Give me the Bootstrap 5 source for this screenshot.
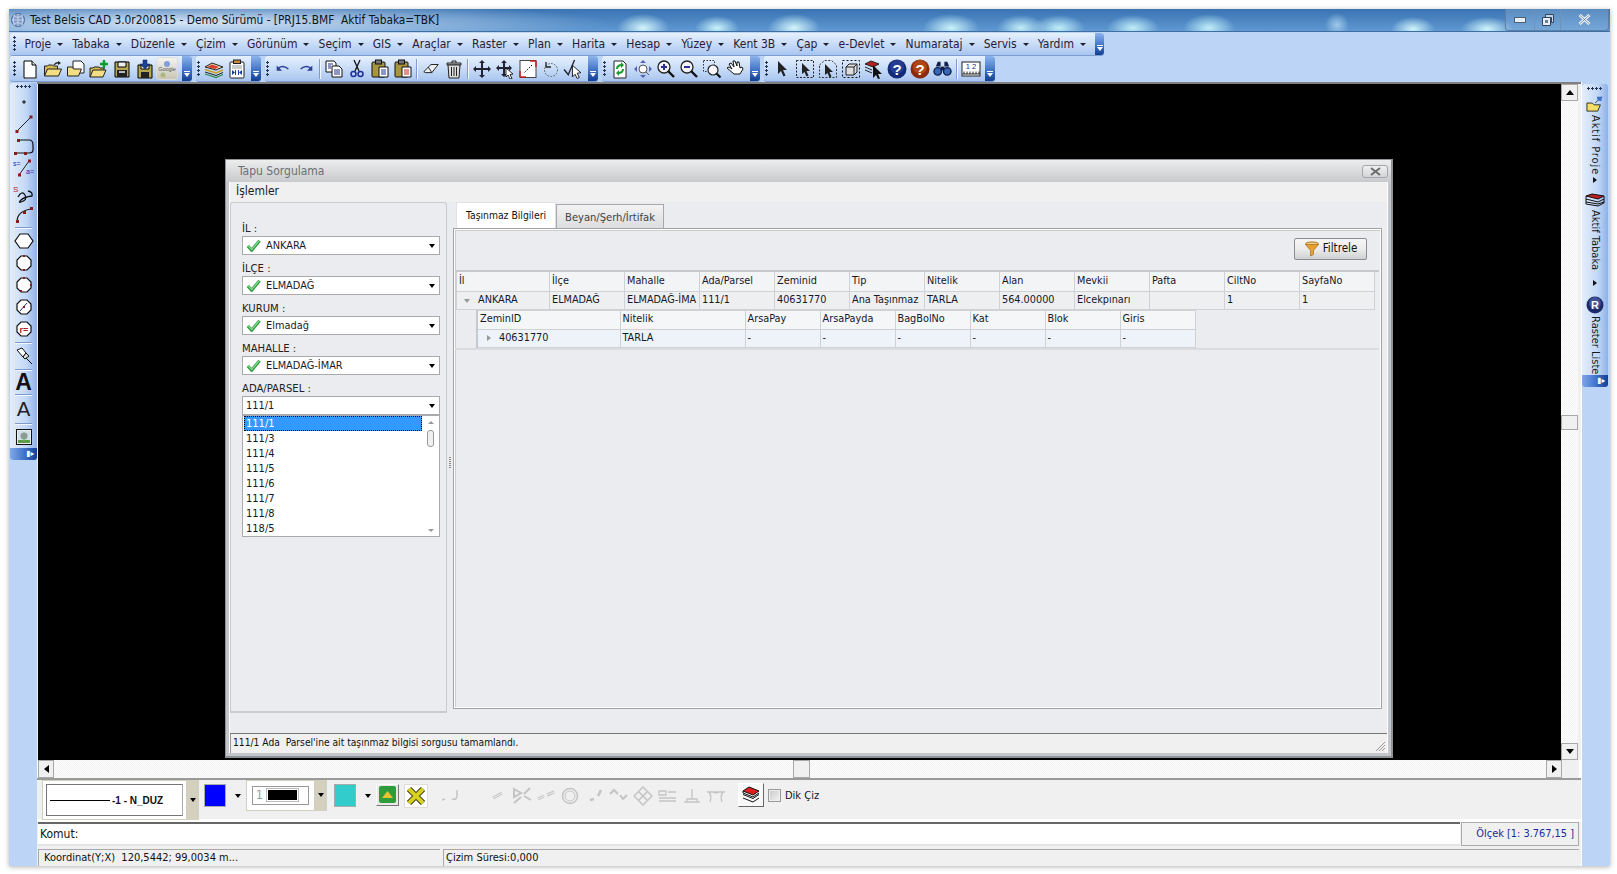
<!DOCTYPE html>
<html lang="tr">
<head>
<meta charset="UTF-8">
<title>Test Belsis CAD</title>
<link href="https://cdn.jsdelivr.net/npm/bootstrap@5.3.3/dist/css/bootstrap.min.css" rel="stylesheet">
<style>
html,body{height:100%;overflow:hidden}
body{background:#fff;font-family:"DejaVu Sans Condensed","DejaVu Sans",sans-serif;font-size:11.5px;color:#10152a;line-height:1.2}
svg{display:block;flex:none}
.appwin{position:absolute;left:9px;top:9px;width:1601px;height:857px;background:#bcd4f6;box-shadow:0 1px 5px rgba(0,0,0,.3)}
.titlebar{height:23px;border-bottom:1px solid #3f6ea0;padding-left:1px;font-size:11.8px;color:#0c1420;
 background:
 radial-gradient(ellipse 26px 14px at 634px 19px,#d4f6fb,transparent),
 radial-gradient(ellipse 22px 12px at 708px 19px,#c9f2fa,transparent),
 radial-gradient(ellipse 26px 14px at 785px 19px,#d4f6fb,transparent),
 radial-gradient(ellipse 28px 14px at 942px 19px,#c9f2fa,transparent),
 radial-gradient(ellipse 24px 13px at 1012px 19px,#c0ecf7,transparent),
 radial-gradient(ellipse 26px 13px at 1050px 19px,#bfeef8,transparent),
 radial-gradient(ellipse 26px 13px at 1124px 19px,#bfeef8,transparent),
 radial-gradient(ellipse 26px 14px at 1200px 19px,#bfeef8,transparent),
 radial-gradient(ellipse 12px 12px at 1328px 16px,#9fc8ea,transparent),
 radial-gradient(ellipse 22px 12px at 1404px 20px,#cff5fb,transparent),
 radial-gradient(ellipse 26px 12px at 1478px 20px,#cff5fb,transparent),
 radial-gradient(ellipse 420px 22px at 180px 14px,#d6e4f6,transparent),
 linear-gradient(#3a74b2,#5f98d2)}
.wbtns{height:22px;margin-right:1px;border:1px solid #5d7fa6;border-top:0;border-radius:0 0 4px 4px;background:rgba(190,215,240,.25)}
.wb{height:21px;border-right:1px solid #6e93bb}
.wb:last-child{border-right:0}
.wb1{width:29px}.wb2{width:26px}.wb3{width:47px}
.menurow{height:24px;padding:1px 0 0 1px}
.tgrp,.menustrip{border-radius:3px;height:23px;background:linear-gradient(#e6f0fd,#c5daf7 55%,#a9c5ef);border-bottom:1px solid #7d9dd0}
.menustrip{width:1094px;padding-left:3px}
.toolrow{height:26px;padding:0 0 0 1px;gap:4px}
.tgrp{height:26px;padding-left:1px}
.tg1{width:182px;padding-left:3px}.tg2{width:65px}.tg3{width:333px}.tg4{width:158px}.tg5{width:231px}
.tgrip{width:5px;height:16px;background:radial-gradient(circle at 1.5px 1.5px,#22344f 1.2px,transparent 1.4px) 0 0/5px 4px repeat-y}
.mgrip{margin-right:7px}
.ovf{width:10px;align-self:stretch;margin-left:auto;border-radius:0 3px 3px 0;background:linear-gradient(#8cb4ec,#3c6fc4 60%,#123f92);position:relative}
.ovf::after{content:"";position:absolute;left:2px;bottom:4px;border:3px solid transparent;border-top:4px solid #fff;border-bottom:0}
.ovf::before{content:"";position:absolute;left:2px;bottom:9px;width:6px;height:1px;background:#fff}
.tb{width:23px;height:23px;display:flex;align-items:center;justify-content:center}
.tsep{width:5px;height:20px;display:flex;justify-content:center}
.tsep::after{content:"";width:1px;background:#7d9bcb;box-shadow:1px 0 #f2f7ff}
.mi{color:#2b1a35;text-decoration:none;font-size:12px;white-space:nowrap;padding-right:9.2px}
.mi.dropdown-toggle::after{margin-left:6px;border-top:3.5px solid #1c1c2c;border-right:3px solid transparent;border-left:3px solid transparent;border-bottom:0;vertical-align:2px}
.leftdock{width:28px;padding-left:1px;padding-top:1px}
.vtool{border-radius:3px;background:linear-gradient(90deg,#e4eefc,#c2d8f6 60%,#8fb0e6);width:27px}
.ltool{height:377px;padding-top:1px}
.lt{height:22px;flex:none;display:flex;justify-content:center;align-items:center}
.lt-arc{margin-top:-2px}
.lt-a{height:20px;line-height:20px;font:700 23px/20px "Liberation Sans",sans-serif;color:#111}
.lt-b{height:24px;font:400 20px/24px "DejaVu Sans",sans-serif;color:#222}
.vgrip{height:5px;width:16px;margin:1px 0 1px;flex:none;background:radial-gradient(circle at 1.5px 1.5px,#22344f 1.2px,transparent 1.4px) 0 0/4px 5px repeat-x}
.vsep{width:17px;height:1px;flex:none;background:#7d9bcb;box-shadow:0 1px #f2f7ff;margin:2px 0}
.imgic{margin-top:3px}
.vovf{height:12px;margin-top:auto;flex:none;border-radius:0 0 3px 3px;background:linear-gradient(90deg,#7fa8e8,#3f72c8 55%,#123f92);font-size:8px;line-height:12px;color:#fff;text-align:right;padding-right:3px}
.centercol{width:1544px;background:#fff}
.topedge{height:2px;background:#7f7f7f;flex:none}
.canvasrow{height:676px;padding-left:1px;background:#f0f0f0;flex:none;padding-right:2px}
.blackarea{width:1523px;background:#000;position:relative}
.dither{background:repeating-conic-gradient(#fff 0 25%,#f1f1f1 0 50%) 0 0/2px 2px}
.vscroll{width:17px}
.sbtn{width:17px;height:17px;background:#f0f0f0;border:1px solid #a8a8a8;display:flex;align-items:center;justify-content:center;flex:none}
.hbtn{width:16px;height:18px}
.vthumb{width:17px;height:15px;margin-top:314px;background:#f0f0f0;border:1px solid #a8a8a8}
.hscroll{height:18px;padding-left:1px;flex:none;padding-right:2px}
.hthumb{width:17px;height:18px;margin-left:739px;background:#f0f0f0;border:1px solid #a8a8a8}
.corner{width:17px;background:#f0f0f0}
.arr-u{border:4px solid transparent;border-bottom:5px solid #000;border-top:0}
.arr-d{border:4px solid transparent;border-top:5px solid #000;border-bottom:0}
.arr-l{border:4px solid transparent;border-right:5px solid #000;border-left:0}
.arr-r{border:4px solid transparent;border-left:5px solid #000;border-right:0}
.btoolwrap{height:44px;flex:none;background:#f0f0f0;border-top:2px solid #9a9a9a;padding-left:1px;border-bottom:3px solid #fff}
.lsbox{width:145px;height:40px;margin:1px 0 0 4px;background:#fff;border:1px solid #d2cfbd;padding:3px}
.lsinner{height:32px;border:1px solid #777;border-color:#777 #aaa #777 #777;padding-left:3px;font:bold 10px "Liberation Sans",sans-serif;color:#111}
.lsline{width:60px;height:1px;border-top:1.5px solid #000;margin-right:2px}
.dd{width:12px;height:40px;margin-top:1px;background:#d4d0c0;display:flex;align-items:center;justify-content:center}
.dd i,.smallarr{display:block;border:3.5px solid transparent;border-top:4.5px solid #000;border-bottom:0}
.colorsw{width:22px;height:23px;border:1px solid #aaa;margin-left:5px;margin-top:-9px}
.c-blue{background:#0000ff}.c-teal{background:#33cccc;margin-left:7px}
.smallarr{margin:0 5px 0 9px}
.wbox{width:69px;height:31px;margin:0 0 9px 0;background:#fff;border:1px solid #d2cfbd;padding:5px 5px}
.winner{height:100%;border:1px solid #999;color:#999;font-size:12px;padding-left:3px;gap:5px}
.wbar{width:29px;height:10px;background:#000;outline:1px solid #bbb;outline-offset:1px}
.ddw{width:12px;height:31px;margin-bottom:9px;background:#d4d0c0;display:flex;align-items:center;justify-content:center}
.gbtn{width:23px;height:22px;margin:0 5px 10px 0;border:1px solid;border-color:#fff #777 #777 #fff;background:#e8e8e8;display:flex;align-items:center;justify-content:center}
.ybtn{width:24px;height:24px;margin-bottom:8px;background:#fff;border:1px solid #ddd;display:flex;align-items:center;justify-content:center}
.bookbtn{width:26px;height:24px;margin-bottom:9px;background:#f8f8f8;border:1px solid;border-color:#fff #666 #666 #fff;display:flex;align-items:center;justify-content:center}
.dikchk{width:13px;height:13px;border:1px solid #999;background:linear-gradient(135deg,#c8c8c8,#f4f4f4);margin:0 4px;box-shadow:inset 0 0 0 1px #eee}
.dikwrap{margin-bottom:8px;font-size:11px}
.cmdrow{height:24px;flex:none;background:#f0f0f0;padding-left:1px;padding-right:2px}
.cmdin{flex:1;background:#fff;border-top:2px solid #666;border-bottom:2px solid #e4e4e4;margin-right:1px;font-size:12px;padding:3px 0 0 2px;color:#111}
.scalebox{width:118px;border:1px solid #aaa;background:#f0f0f0;color:#1c2a9c;text-align:right;padding:4px 4px 0 0;font-size:10.9px}
.statusrow{flex:1;background:#f0f0f0;padding-top:3px;padding-left:1px;font-size:11px;color:#111}
.stp{border:1px solid #a8a8a8;border-width:1px 0 0 1px;padding:1px 0 0 5px;height:100%}
.stp1{width:402px}.stp2{flex:1;margin:0 2px 0 3px;padding-left:2px}
.rightdock{width:29px;border-left:1px solid #fff;padding-top:2px}
.rtool{height:302px;width:26px;padding-top:2px}
.rtool .vgrip{margin:1px 0 3px}
.rtxt{writing-mode:vertical-rl;font-size:11px;color:#1a1a1a;line-height:16px;white-space:nowrap;flex:none}
.rtxt-a{letter-spacing:.9px}
.rarr{display:block;flex:none;border-style:solid;border-width:3px 0 3px 4px;border-color:transparent transparent transparent #111}
.rm3{margin-top:3px}.rm2{margin-top:2px}.rm10{margin-top:10px}
.tdlg{position:absolute;left:187px;top:75px;width:1168px;height:599px;background:#c3c6cb;border:1px solid #8f9297;border-width:1px 2px 2px 1px}
.dhead{height:22px;background:linear-gradient(#eceded,#c8cacd);color:#6b6f76;padding-left:12px;font-size:12px;flex:none}
.dclose{width:26px;height:13px;margin-right:3px;border:1px solid #a3a5a9;border-radius:3px;background:linear-gradient(#f0f0f0,#d4d5d8);display:flex;align-items:center;justify-content:center}
.dinner{flex:1;min-height:0;margin:0 3px 3px 3px;background:#ebecef;border-left:1px solid #fff;border-right:1px solid #fff}
.dmenu{height:20px;background:#f0f0f0;padding:2px 0 0 6px;font-size:12px;color:#222;flex:none}
.dbody{flex:1;min-height:0}
.lpanel{width:217px;border:1px solid #c8cace;border-width:1px 1px 2px 1px;border-radius:3px 3px 0 0;padding:12px 6px 0 11px;font-size:11.2px}
.flbl{height:21px;padding-top:7px;color:#222}
.cmb{height:19px;border:1px solid #a8aaae;background:#fff;padding-left:3px;gap:5px;color:#1a1a2a;font-size:10.9px}
.cmb .smallarr{margin:0 4px 0 auto}
.dlist{position:absolute;top:100%;left:0;right:0;height:122px;background:#fff;border:1px solid #a8aaae;z-index:2;color:#14182a;font-size:11px}
.ditem{height:15px;line-height:15px;padding-left:2px;margin-left:1px}
.dsel{background:#3399ff;color:#fff;outline:1px dotted #000;outline-offset:-1px}
.lscroll{width:17px;padding-top:5px}
.lthumb{width:7px;height:17px;border:1px solid #9a9a9a;border-radius:3px;background:#f0f0f0;margin-top:6px}
.ua{border:3px solid transparent;border-bottom:3px solid #999;border-top:0}
.da{border:3px solid transparent;border-top:3px solid #999;border-bottom:0;margin-top:auto;margin-bottom:4px}
.splitter{width:6px}
.splitgrip{width:2px;height:11px;background:repeating-linear-gradient(#888 0 1px,#eee 1px 2px);margin-top:9px}
.rpanel{flex:1;min-width:0;padding:0 5px 0 0;position:relative}
.ttabs{border:0;padding-left:3px;height:26px;flex:none;flex-wrap:nowrap}
.ttabs .nav-link{border:1px solid #a8a8a8;border-bottom:0;border-radius:0;padding:6px 8px 0 8px;font-size:11.1px;color:#444;background:linear-gradient(#f3f3f3,#dcdde0);margin:2px 0 0 0;height:24px}
.ttabs .nav-link.active{background:#fff;color:#111;height:26px;margin-top:0;padding:6px 9px 0 9px;font-size:10.3px}
.tpane{flex:1;border:1px solid #a2a2a2;padding:1px;margin-bottom:4px;background:#fff;min-height:0}
.tpane-in{height:100%;background:#ebecef;padding:0 1px 0 0;box-shadow:inset 1px 1px #ccc}
.ftrow{height:42px;padding-right:12px;border-bottom:2px solid #c6c8cc;flex:none;padding-top:8px}
.fbtn{width:73px;height:22px;padding:0;font-size:11.5px;border:1px solid #8b8d90;border-radius:2px;background:linear-gradient(#f6f6f6,#ececec 50%,#cfd0d2);color:#111;display:flex;align-items:center;justify-content:center;gap:3px}
.gtbl{border-collapse:collapse;table-layout:fixed;color:#14182a;font-size:10.8px}
.gtbl td,.gtbl th{font-weight:400;border:1px solid #cfd1d5;padding:0 0 0 2px;white-space:nowrap;overflow:hidden;height:18px}
.gmain th{background:#f3f4f6;height:19px;border-top:0}
.gmain td{background:#eeeff1}
.gsub th{background:#f5f6f8;height:19px}
.gsub td{background:#edf3f8}
.gmain{width:918px;margin-left:1px}
.gsubwrap{padding-left:21px;border-bottom:2px solid #dadce0;flex:none}
.gsub{width:718px;border-left:2px solid #c6c8cc}
.pad-exp{padding-left:21px !important;position:relative}
.tree-d{position:absolute;left:7px;top:7px;border:3.5px solid transparent;border-top:4px solid #999;border-bottom:0}
.tree-r{position:absolute;left:9px;top:5px;border:3.5px solid transparent;border-left:4px solid #999;border-right:0}
.dpadbar{height:20px;flex:none}
.dstatus{height:20px;flex:none;background:#f0f0f0;border-top:1px solid #777;padding:3px 0 0 3px;font-size:10.2px;box-shadow:inset 1px 0 #999;position:relative;color:#111}
.grip{position:absolute;right:1px;bottom:1px}
</style>
</head>
<body>
<svg width="0" height="0" class="position-absolute">
<defs>
<symbol id="s-new" viewBox="0 0 20 20"><path d="M4 2h8l4 4v13H4z" fill="#fff" stroke="#000"/><path d="M12 2v4h4" fill="#ddd" stroke="#000"/><path d="M5 20h12" stroke="#888"/></symbol>
<symbol id="s-open" viewBox="0 0 20 20"><path d="M1.5 17V7h3l1-1h4l1 1h4v3" fill="#d6bb55" stroke="#222"/><path d="M1.5 17l3-7h14l-3 7z" fill="#f4de84" stroke="#222"/><path d="M11 6q2-3 5-2" fill="none" stroke="#222" stroke-width="1.3"/><path d="M15 2l3 2-3 2z" fill="#222"/></symbol>
<symbol id="s-open2" viewBox="0 0 20 20"><path d="M7 2h8l3 3v9H7z" fill="#fff" stroke="#222"/><path d="M1.5 17V8h5l1 2h8l-3 7z" fill="#f4de84" stroke="#222"/></symbol>
<symbol id="s-folderp" viewBox="0 0 20 20"><path d="M1 18V9h3l1-1h5l1 1h4v2" fill="#d6bb55" stroke="#222"/><path d="M1 18l3-7h13l-3 7z" fill="#f4de84" stroke="#222"/><path d="M15 1v8M11 5h8" stroke="#0c9c2c" stroke-width="2.4"/></symbol>
<symbol id="s-save" viewBox="0 0 20 20"><path d="M3 3h14v15H3z" fill="#b7a650" stroke="#000"/><path d="M6 3h8v5H6z" fill="#eee" stroke="#000"/><path d="M5 11h10v7H5z" fill="#222"/><path d="M7 12h6v2H7z" fill="#bbb"/></symbol>
<symbol id="s-saveas" viewBox="0 0 20 20"><path d="M3 6h14v13H3z" fill="#b7a650" stroke="#000"/><path d="M6 13h8v6H6z" fill="#222"/><path d="M6 6h8v4H6z" fill="#eee" stroke="#000"/><path d="M8 1h4v4h3l-5 5-5-5h3z" fill="#1c3f96" stroke="#0a1f50" stroke-width=".5"/></symbol>
<symbol id="s-layers" viewBox="0 0 20 20"><path d="M1 8l7-4 11 4-7 3z" fill="#e8dcc0" stroke="#222"/><path d="M3 8l5-2.500 7 2.500-4 2z" fill="#d8402c"/><path d="M1 10.500l11 3.500 7-3" fill="none" stroke="#c8a020" stroke-width="1.500"/><path d="M1 13l11 3.500 7-3" fill="none" stroke="#222"/><path d="M1 15l11 3.500 7-3" fill="none" stroke="#2c8c48" stroke-width="1.300"/></symbol>
<symbol id="s-clip" viewBox="0 0 20 20"><rect x="3" y="3" width="14" height="16" rx="1" fill="#fff" stroke="#222"/><rect x="6.500" y="1" width="7" height="3.500" fill="#c83" stroke="#222"/><path d="M5 7h10M5 9h10" stroke="#999"/><path d="M5 11v5l3-2.500zM15 11v5l-3-2.500z" fill="#1c3f96"/><path d="M8.500 11v5M11.500 11v5" stroke="#1c3f96"/></symbol>
<symbol id="s-undo" viewBox="0 0 20 20"><path d="M5 9q5-4 11 1" fill="none" stroke="#2c3f96" stroke-width="1.800"/><path d="M3 6v6h6z" fill="#2c3f96"/></symbol>
<symbol id="s-redo" viewBox="0 0 20 20"><path d="M15 9q-5-4-11 1" fill="none" stroke="#2c3f96" stroke-width="1.800"/><path d="M17 6v6h-6z" fill="#2c3f96"/></symbol>
<symbol id="s-copy" viewBox="0 0 20 20"><path d="M2 2h8l2 2v9H2z" fill="#fff" stroke="#111"/><path d="M8 7h7l3 3v8H8z" fill="#fff" stroke="#111"/><path d="M4 5h5M4 7h3M4 9h3M10 11h6M10 13h6M10 15h6" stroke="#1c2f86"/></symbol>
<symbol id="s-cut" viewBox="0 0 20 20"><path d="M7 1l5 11M13 1l-5 11" stroke="#111" stroke-width="1.300"/><circle cx="6.500" cy="15" r="2.500" fill="none" stroke="#1c2f96" stroke-width="1.500"/><circle cx="13.500" cy="15" r="2.500" fill="none" stroke="#1c2f96" stroke-width="1.500"/></symbol>
<symbol id="s-paste" viewBox="0 0 20 20"><rect x="2" y="3" width="13" height="15" rx="1" fill="#a89540" stroke="#111"/><rect x="5.500" y="1" width="6" height="4" fill="#777" stroke="#111"/><path d="M9 8h9v10H9z" fill="#fff" stroke="#111"/><path d="M11 11h5M11 13h5M11 15h5" stroke="#1c2f96"/></symbol>
<symbol id="s-paste2" viewBox="0 0 20 20"><rect x="2" y="3" width="13" height="15" rx="1" fill="#a89540" stroke="#111"/><rect x="5.500" y="1" width="6" height="4" fill="#777" stroke="#111"/><path d="M9 8h9v10H9z" fill="#fff" stroke="#111"/><path d="M11 11h5M11 13h5M11 15h5" stroke="#c8201c"/></symbol>
<symbol id="s-eraser" viewBox="0 0 20 20"><path d="M2 13l8-8h8l-7 9H4z" fill="#eee" stroke="#111"/><path d="M7 8l4 6" stroke="#111"/></symbol>
<symbol id="s-trash" viewBox="0 0 20 20"><path d="M3 4h14v2H3z" fill="#ccc" stroke="#222"/><path d="M8 4V2h4v2" fill="none" stroke="#222"/><path d="M4 6l1 13h10l1-13z" fill="#ddd" stroke="#222"/><path d="M7.500 8v9M10 8v9M12.500 8v9" stroke="#222"/></symbol>
<symbol id="s-move" viewBox="0 0 20 20"><path d="M10 1l3 3h-2v5h5V7l3 3-3 3v-2h-5v5h2l-3 3-3-3h2v-5H4v2l-3-3 3-3v2h5V4H7z" fill="#223"/></symbol>
<symbol id="s-move2" viewBox="0 0 20 20"><path d="M9 1l3 3h-2v4h4V6l3 3-3 3v-2h-4v5h2l-3 3-3-3h2v-5H4v2L1 9l3-3v2h4V4H6z" fill="#223"/><path d="M11 9l7 6-3 .5 2 4-2 .5-2-4-2 2z" fill="#fff" stroke="#000" stroke-width=".8"/></symbol>
<symbol id="s-rect" viewBox="0 0 20 20"><rect x="2" y="1.500" width="16" height="17" fill="#fff" stroke="#444"/><path d="M18 2h-6M18 2v6M2 18h6M2 18v-6" stroke="#c8201c" stroke-width="1.500"/><path d="M14 6L6 14" stroke="#000" stroke-dasharray="1.500 1.500"/></symbol>
<symbol id="s-rot" viewBox="0 0 20 20"><circle cx="10" cy="11" r="6.500" fill="none" stroke="#555" stroke-dasharray="1.500 1.500"/><path d="M5 3v5h5" fill="none" stroke="#222" stroke-width="1.300"/></symbol>
<symbol id="s-chk" viewBox="0 0 20 20"><path d="M1 11l4 5 6-14" fill="none" stroke="#223" stroke-width="1.300"/><path d="M9 7l8 7-3.500.5 2 4-2 1-2-4-2.500 2.500z" fill="#fff" stroke="#000" stroke-width=".8"/></symbol>
<symbol id="s-refr" viewBox="0 0 20 20"><path d="M4 2h9l3 3v14H4z" fill="#fff" stroke="#222"/><path d="M7 10q0-4 5-4M13 10q0 4-5 4" fill="none" stroke="#1c9c2c" stroke-width="2"/><path d="M11 3l3 3-3 3zM9 11l-3 3 3 3z" fill="#1c9c2c"/></symbol>
<symbol id="s-pan" viewBox="0 0 20 20"><circle cx="10" cy="10" r="4" fill="#fff" stroke="#555"/><path d="M10 1l3 3H7zM10 19l3-3H7zM1 10l3-3v6zM19 10l-3-3v6z" fill="#5a62b8"/><path d="M13 13l3 3" stroke="#555"/></symbol>
<symbol id="s-zin" viewBox="0 0 20 20"><circle cx="8" cy="8" r="6" fill="#f2f2f8" stroke="#222" stroke-width="1.300"/><path d="M12 12l6 6" stroke="#111" stroke-width="2.400"/><path d="M5 8h6M8 5v6" stroke="#2c2f96" stroke-width="2"/></symbol>
<symbol id="s-zout" viewBox="0 0 20 20"><circle cx="8" cy="8" r="6" fill="#f2f2f8" stroke="#222" stroke-width="1.300"/><path d="M12 12l6 6" stroke="#111" stroke-width="2.400"/><path d="M5 8h6" stroke="#2c2f96" stroke-width="2"/></symbol>
<symbol id="s-zwin" viewBox="0 0 20 20"><path d="M1.500 1.500h11v11h-11z" fill="none" stroke="#333" stroke-dasharray="1.500 1.500"/><circle cx="11" cy="11" r="5" fill="#f6f6fa" stroke="#222" stroke-width="1.200"/><path d="M14.500 14.500l4 4" stroke="#111" stroke-width="2.200"/></symbol>
<symbol id="s-hand" viewBox="0 0 20 20"><path d="M2 9l2-1 3 2-3-5 2-1 3 4-1-6h2l2 5V3h2l1 6 2-1 1 2-3 5H9z" fill="#fff" stroke="#111"/></symbol>
<symbol id="s-ptr" viewBox="0 0 20 20"><path d="M6 2l9 9h-4l2.500 5.500-2 1L9 12l-3 3z" fill="#222"/></symbol>
<symbol id="s-sel1" viewBox="0 0 20 20"><rect x="1.500" y="1.500" width="17" height="17" fill="none" stroke="#222" stroke-dasharray="2 1.500"/><path d="M7 4l8 8h-3.500l2 4.500-2 1-2-4.500L7 15z" fill="#222"/></symbol>
<symbol id="s-sel2" viewBox="0 0 20 20"><path d="M1.500 6l5-4.500h7l5 4.500v12.500h-17z" fill="none" stroke="#333" stroke-dasharray="2 1.500"/><path d="M7 5l8 8h-3.500l2 4.500-2 1-2-4.500L7 16z" fill="#222"/></symbol>
<symbol id="s-sel3" viewBox="0 0 20 20"><rect x="1.500" y="1.500" width="17" height="17" fill="none" stroke="#111" stroke-dasharray="2 2"/><path d="M5 8l3-3h8v8l-3 3H5zM5 8h8v8M13 8l3-3" fill="#ddd" stroke="#222"/></symbol>
<symbol id="s-larrow" viewBox="0 0 20 20"><path d="M1 5l6-3 8 3-6 3z" fill="#b8201c" stroke="#222"/><path d="M1 8l7 3M1 11l7 3" stroke="#222" fill="none"/><path d="M9 6l9 9h-4l2 4.500-2 .5-2-4-3 3z" fill="#111"/></symbol>
<symbol id="s-help" viewBox="0 0 20 20"><circle cx="10" cy="10" r="9.500" fill="#132a78"/><circle cx="10" cy="8" r="7" fill="#3650a8" opacity=".5"/><text x="10" y="15.500" text-anchor="middle" font-family="Liberation Sans" font-weight="700" font-size="15" fill="#fff">?</text></symbol>
<symbol id="s-help2" viewBox="0 0 20 20"><circle cx="10" cy="10" r="9.500" fill="#8c2a0c"/><circle cx="10" cy="8" r="7" fill="#c85a1c" opacity=".6"/><text x="10" y="15.500" text-anchor="middle" font-family="Liberation Sans" font-weight="700" font-size="15" fill="#fff">?</text></symbol>
<symbol id="s-binoc" viewBox="0 0 20 20"><path d="M3 8l2-5h3v5zM17 8l-2-5h-3v5z" fill="#10204c"/><circle cx="5" cy="13" r="4" fill="#3a66b8" stroke="#10204c" stroke-width="1.400"/><circle cx="15" cy="13" r="4" fill="#3a66b8" stroke="#10204c" stroke-width="1.400"/><path d="M8 8h4v4H8z" fill="#10204c"/></symbol>
<symbol id="s-scale" viewBox="0 0 20 20"><rect x="1" y="3" width="18" height="14" fill="#fff" stroke="#222"/><text x="10" y="10" text-anchor="middle" font-family="Liberation Sans" font-size="7.500" fill="#1c2a8c">1 2</text><path d="M1.500 15h17M3 12.500V15M6 12.500V15M9 12.500V15M12 12.500V15M15 12.500V15M18 12.500V15" stroke="#111" stroke-width=".9"/></symbol>
<symbol id="s-check" viewBox="0 0 16 16"><path d="M2 8.500l4 4.500 8.500-10" fill="none" stroke="#2f9c42" stroke-width="3.400" stroke-linejoin="round"/><path d="M2.500 8.500l3.500 4 8-9.500" fill="none" stroke="#8fdc90" stroke-width="1.200"/></symbol>
<symbol id="s-funnel" viewBox="0 0 16 16"><ellipse cx="8" cy="3" rx="6.500" ry="2" fill="#f4d080" stroke="#a87020"/><path d="M1.500 3.500L6.500 9.500v5.500l3-1.500V9.500l5-6z" fill="#e8a030" stroke="#a87020" stroke-width=".7"/></symbol>
<symbol id="s-book" viewBox="0 0 20 20"><path d="M2 6l6-4 10 4-6 4z" fill="#e01c1c" stroke="#111"/><path d="M2 6v2l10 4 6-4M2 9.500l10 4 6-4M2 13l10 4 6-4" fill="none" stroke="#111"/></symbol>
</defs>
</svg>

<div class="appwin d-flex flex-column">
  <div class="titlebar d-flex align-items-center flex-none">
    <svg width="16" height="16" viewBox="0 0 18 18" class="me-1"><circle cx="9" cy="9" r="7.500" fill="#7f9cc8" stroke="#4f6a98"/><path d="M2 9h14M9 2v14M4 4q5 4 10 0M4 14q5-4 10 0M5 3q-3 6 0 12M13 3q3 6 0 12" stroke="#dfe8f6" fill="none" stroke-width=".8"/></svg>
    <span>Test Belsis CAD 3.0r200815 - Demo Sürümü - [PRJ15.BMF&nbsp; Aktif Tabaka=TBK]</span>
    <div class="wbtns d-flex ms-auto">
      <div class="wb wb1 d-flex align-items-center justify-content-center"><svg width="12" height="6" viewBox="0 0 12 6"><rect x=".5" y=".5" width="11" height="5" fill="#e8eff6" stroke="#4a5f78"/></svg></div>
      <div class="wb wb2 d-flex align-items-center justify-content-center"><svg width="12" height="12" viewBox="0 0 12 12"><path d="M3.500.5h8v8h-2V3.500h-6z" fill="#c4d4e4" stroke="#2f4560"/><path d="M.5 3.500h8v8h-8z" fill="#e8eff6" stroke="#2f4560"/><path d="M3 6h3v3H3z" fill="#6b8099"/></svg></div>
      <div class="wb wb3 d-flex align-items-center justify-content-center"><svg width="13" height="11" viewBox="0 0 13 11"><path d="M1.500 1l10 9M11.500 1l-10 9" stroke="#f2f6fa" stroke-width="3"/><path d="M1.500 1l10 9M11.500 1l-10 9" stroke="#4a5f78" stroke-width=".7"/></svg></div>
    </div>
  </div>

  <div class="menurow flex-none">
    <div class="menustrip d-flex align-items-center">
      <div class="tgrip mgrip"></div>
      <a class="mi dropdown-toggle">Proje</a>
      <a class="mi dropdown-toggle">Tabaka</a>
      <a class="mi dropdown-toggle">Düzenle</a>
      <a class="mi dropdown-toggle">Çizim</a>
      <a class="mi dropdown-toggle">Görünüm</a>
      <a class="mi dropdown-toggle">Seçim</a>
      <a class="mi dropdown-toggle">GIS</a>
      <a class="mi dropdown-toggle">Araçlar</a>
      <a class="mi dropdown-toggle">Raster</a>
      <a class="mi dropdown-toggle">Plan</a>
      <a class="mi dropdown-toggle">Harita</a>
      <a class="mi dropdown-toggle">Hesap</a>
      <a class="mi dropdown-toggle">Yüzey</a>
      <a class="mi dropdown-toggle">Kent 3B</a>
      <a class="mi dropdown-toggle">Çap</a>
      <a class="mi dropdown-toggle">e-Devlet</a>
      <a class="mi dropdown-toggle">Numarataj</a>
      <a class="mi dropdown-toggle">Servis</a>
      <a class="mi dropdown-toggle">Yardım</a>
      <div class="ovf"></div>
    </div>
  </div>

  <div class="toolrow d-flex flex-none">
    <div class="tgrp tg1 d-flex align-items-center">
      <div class="tgrip"></div>
      <div class="tb"><svg width="20" height="20"><use href="#s-new"/></svg></div>
      <div class="tb"><svg width="20" height="20"><use href="#s-open"/></svg></div>
      <div class="tb"><svg width="20" height="20"><use href="#s-open2"/></svg></div>
      <div class="tb"><svg width="20" height="20"><use href="#s-folderp"/></svg></div>
      <div class="tb"><svg width="20" height="20"><use href="#s-save"/></svg></div>
      <div class="tb"><svg width="20" height="20"><use href="#s-saveas"/></svg></div>
      <svg width="22" height="23" viewBox="0 0 22 23"><defs><linearGradient id="gg" x1="0" y1="0" x2="0" y2="1"><stop offset="0" stop-color="#f4f4f0"/><stop offset="1" stop-color="#c8c4b4"/></linearGradient></defs><rect x=".5" y=".5" width="21" height="22" rx="3" fill="url(#gg)" stroke="#dcdcdc"/><circle cx="11" cy="7" r="3" fill="#7f9fd8"/><circle cx="7" cy="18" r="2.500" fill="#a8b880"/><text x="11" y="14" text-anchor="middle" font-family="Liberation Sans" font-size="5.500" fill="#555">Google</text></svg>
      <div class="ovf"></div>
    </div>
    <div class="tgrp tg2 d-flex align-items-center">
      <div class="tgrip"></div>
      <div class="tb"><svg width="20" height="20"><use href="#s-layers"/></svg></div>
      <div class="tb"><svg width="20" height="20"><use href="#s-clip"/></svg></div>
      <div class="ovf"></div>
    </div>
    <div class="tgrp tg3 d-flex align-items-center">
      <div class="tgrip"></div>
      <div class="tb"><svg width="18" height="18"><use href="#s-undo"/></svg></div>
      <div class="tb"><svg width="18" height="18"><use href="#s-redo"/></svg></div>
      <div class="tsep"></div>
      <div class="tb"><svg width="20" height="20"><use href="#s-copy"/></svg></div>
      <div class="tb"><svg width="20" height="20"><use href="#s-cut"/></svg></div>
      <div class="tb"><svg width="20" height="20"><use href="#s-paste"/></svg></div>
      <div class="tb"><svg width="20" height="20"><use href="#s-paste2"/></svg></div>
      <div class="tsep"></div>
      <div class="tb"><svg width="18" height="18"><use href="#s-eraser"/></svg></div>
      <div class="tb"><svg width="20" height="20"><use href="#s-trash"/></svg></div>
      <div class="tsep"></div>
      <div class="tb"><svg width="20" height="20"><use href="#s-move"/></svg></div>
      <div class="tb"><svg width="20" height="20"><use href="#s-move2"/></svg></div>
      <div class="tb"><svg width="20" height="20"><use href="#s-rect"/></svg></div>
      <div class="tb"><svg width="20" height="20"><use href="#s-rot"/></svg></div>
      <div class="tb"><svg width="21" height="21"><use href="#s-chk"/></svg></div>
      <div class="ovf"></div>
    </div>
    <div class="tgrp tg4 d-flex align-items-center">
      <div class="tgrip"></div>
      <div class="tb"><svg width="20" height="20"><use href="#s-refr"/></svg></div>
      <div class="tb"><svg width="20" height="20"><use href="#s-pan"/></svg></div>
      <div class="tb"><svg width="20" height="20"><use href="#s-zin"/></svg></div>
      <div class="tb"><svg width="20" height="20"><use href="#s-zout"/></svg></div>
      <div class="tb"><svg width="20" height="20"><use href="#s-zwin"/></svg></div>
      <div class="tb"><svg width="20" height="20"><use href="#s-hand"/></svg></div>
      <div class="ovf"></div>
    </div>
    <div class="tgrp tg5 d-flex align-items-center">
      <div class="tgrip"></div>
      <div class="tb"><svg width="20" height="20"><use href="#s-ptr"/></svg></div>
      <div class="tb"><svg width="20" height="20"><use href="#s-sel1"/></svg></div>
      <div class="tb"><svg width="20" height="20"><use href="#s-sel2"/></svg></div>
      <div class="tb"><svg width="20" height="20"><use href="#s-sel3"/></svg></div>
      <div class="tb"><svg width="20" height="20"><use href="#s-larrow"/></svg></div>
      <div class="tb"><svg width="20" height="20"><use href="#s-help"/></svg></div>
      <div class="tb"><svg width="20" height="20"><use href="#s-help2"/></svg></div>
      <div class="tb"><svg width="19" height="19"><use href="#s-binoc"/></svg></div>
      <div class="tsep"></div>
      <div class="tb"><svg width="20" height="20"><use href="#s-scale"/></svg></div>
      <div class="ovf"></div>
    </div>
  </div>

  <div class="d-flex flex-grow-1 overflow-hidden">
    <div class="leftdock flex-none">
      <div class="vtool ltool d-flex flex-column align-items-center">
        <div class="vgrip"></div>
        <div class="lt"><svg width="20" height="20" viewBox="0 0 20 20"><path d="M10 8v4M8 10h4" stroke="#111"/></svg></div>
        <div class="lt"><svg width="20" height="20" viewBox="0 0 20 20"><path d="M3 17L17 3" stroke="#222"/><path d="M1.500 16h3v3h-3zM15.500 1.500h3v3h-3z" fill="#8c1c1c"/></svg></div>
        <div class="lt"><svg width="20" height="20" viewBox="0 0 20 20"><path d="M4 4h11q4 0 4 5v5q0 3-4 3H2" fill="none" stroke="#111" stroke-width="1.200"/><path d="M3 3h3v3H3zM0 16h3v3H0zM10 16h3v3h-3z" fill="#8c1c1c"/></svg></div>
        <div class="lt"><svg width="22" height="20" viewBox="0 0 22 20"><path d="M6 17L16 3" stroke="#222"/><path d="M5 15.500h3v3H5zM15 1.500h3v3h-3z" fill="#8c1c1c"/><text x="0" y="8" font-family="Liberation Sans" font-size="7" fill="#1c2a9c">s=</text><text x="13" y="16" font-family="Liberation Sans" font-size="7" fill="#1c2a9c">a=</text></svg></div>
        <div class="lt mt-1"><svg width="22" height="22" viewBox="0 0 22 22"><path d="M5 14q4-7 7-2t-4 7q-3 1 0-2t11-4q1-4-4-5" fill="none" stroke="#111" stroke-width="1.300"/><text x="0" y="9" font-family="Liberation Sans" font-size="8" fill="#b01c1c">S</text></svg></div>
        <div class="lt lt-arc"><svg width="20" height="20" viewBox="0 0 20 20"><path d="M3 18q0-11 14-13" fill="none" stroke="#111" stroke-width="1.200"/><path d="M2 16h3v3H2zM9 7h3v3H9zM16 3h3v3h-3z" fill="#8c1c1c"/></svg></div>
        <div class="vsep"></div>
        <div class="lt"><svg width="20" height="20" viewBox="0 0 20 20"><path d="M6 3h8l5 7-5 7H6l-5-7z" fill="#fff" stroke="#111" stroke-width="1.200"/></svg></div>
        <div class="lt"><svg width="20" height="20" viewBox="0 0 20 20"><path d="M7 3h6l4 4v6l-4 4H7l-4-4V7z" fill="#fff" stroke="#111" stroke-width="1.200"/><path d="M9 2h2v2H9zM9 16h2v2H9z" fill="#8c1c1c"/></svg></div>
        <div class="lt"><svg width="20" height="20" viewBox="0 0 20 20"><path d="M7 3h6l4 4v6l-4 4H7l-4-4V7z" fill="#fff" stroke="#111" stroke-width="1.200"/><path d="M9 2h2v2H9zM16 9h2v2h-2zM6 15h2v2H6z" fill="#8c1c1c"/></svg></div>
        <div class="lt"><svg width="20" height="20" viewBox="0 0 20 20"><path d="M7 3h6l4 4v6l-4 4H7l-4-4V7z" fill="#fff" stroke="#111" stroke-width="1.200"/><path d="M6 14l7-8" stroke="#1c2a9c"/><path d="M9 9h2v2H9z" fill="#8c1c1c"/></svg></div>
        <div class="lt"><svg width="20" height="20" viewBox="0 0 20 20"><path d="M7 3h6l4 4v6l-4 4H7l-4-4V7z" fill="#fff" stroke="#111" stroke-width="1.200"/><text x="10" y="13.500" text-anchor="middle" font-family="Liberation Sans" font-weight="700" font-size="9" fill="#b01c1c">r=</text></svg></div>
        <div class="vsep"></div>
        <div class="lt"><svg width="20" height="20" viewBox="0 0 20 20"><path d="M3 4l5-2 4 5-3 4z" fill="#fff" stroke="#111"/><path d="M9 11l3-4 3 3-4 3zM12 12l6 6" stroke="#111" fill="#ddd"/></svg></div>
        <div class="vsep"></div>
        <div class="lt lt-a">A</div>
        <div class="vsep"></div>
        <div class="lt lt-b">A</div>
        <div class="vsep"></div>
        <svg class="imgic" width="16" height="16" viewBox="0 0 16 16"><rect x=".5" y=".5" width="15" height="15" fill="#e8f0f4" stroke="#111"/><rect x="2" y="2" width="12" height="12" fill="#cfe0e8"/><circle cx="8" cy="7" r="3.500" fill="#8c9c94"/><path d="M2 11h12v3H2z" fill="#5c9c48"/><path d="M7.500 9h1v3h-1z" fill="#6b4"/></svg>
        <div class="vovf w-100">▮▸</div>
      </div>
    </div>

    <div class="centercol flex-none d-flex flex-column">
      <div class="topedge"></div>
      <div class="canvasrow d-flex">
        <div class="blackarea flex-none">

          <div class="tdlg d-flex flex-column">
            <div class="dhead d-flex align-items-center justify-content-between">
              <span>Tapu Sorgulama</span>
              <div class="dclose"><svg width="11" height="9" viewBox="0 0 11 9"><path d="M1 1l9 7M10 1L1 8" stroke="#6a6c70" stroke-width="2"/></svg></div>
            </div>
            <div class="dinner d-flex flex-column">
              <div class="dmenu">İşlemler</div>
              <div class="dbody d-flex">
                <div class="lpanel flex-none">
                  <div class="flbl">İL :</div>
                  <div class="cmb d-flex align-items-center"><svg width="15" height="15"><use href="#s-check"/></svg><span>ANKARA</span><i class="smallarr"></i></div>
                  <div class="flbl">İLÇE :</div>
                  <div class="cmb d-flex align-items-center"><svg width="15" height="15"><use href="#s-check"/></svg><span>ELMADAĞ</span><i class="smallarr"></i></div>
                  <div class="flbl">KURUM :</div>
                  <div class="cmb d-flex align-items-center"><svg width="15" height="15"><use href="#s-check"/></svg><span>Elmadağ</span><i class="smallarr"></i></div>
                  <div class="flbl">MAHALLE :</div>
                  <div class="cmb d-flex align-items-center"><svg width="15" height="15"><use href="#s-check"/></svg><span>ELMADAĞ-İMAR</span><i class="smallarr"></i></div>
                  <div class="flbl">ADA/PARSEL :</div>
                  <div class="position-relative">
                    <div class="cmb d-flex align-items-center"><span>111/1</span><i class="smallarr"></i></div>
                    <div class="dlist d-flex">
                      <div class="flex-grow-1">
                        <div class="ditem dsel">111/1</div>
                        <div class="ditem">111/3</div>
                        <div class="ditem">111/4</div>
                        <div class="ditem">111/5</div>
                        <div class="ditem">111/6</div>
                        <div class="ditem">111/7</div>
                        <div class="ditem">111/8</div>
                        <div class="ditem">118/5</div>
                      </div>
                      <div class="lscroll d-flex flex-column align-items-center"><i class="ua"></i><div class="lthumb"></div><i class="da"></i></div>
                    </div>
                  </div>
                </div>
                <div class="splitter flex-none d-flex align-items-center justify-content-center"><div class="splitgrip"></div></div>
                <div class="rpanel d-flex flex-column">
                  <ul class="nav nav-tabs ttabs">
                    <li class="nav-item"><a class="nav-link active">Taşınmaz Bilgileri</a></li>
                    <li class="nav-item"><a class="nav-link">Beyan/Şerh/İrtifak</a></li>
                  </ul>
                  <div class="tpane">
                    <div class="tpane-in d-flex flex-column">
                      <div class="ftrow d-flex justify-content-end">
                        <button type="button" class="btn fbtn"><svg width="16" height="16"><use href="#s-funnel"/></svg>Filtrele</button>
                      </div>
                      <table class="gtbl gmain">
                        <colgroup><col style="width:93px"><col style="width:75px"><col style="width:75px"><col style="width:75px"><col style="width:75px"><col style="width:75px"><col style="width:75px"><col style="width:75px"><col style="width:75px"><col style="width:75px"><col style="width:75px"><col style="width:75px"></colgroup>
                        <tr><th>İl</th><th>İlçe</th><th>Mahalle</th><th>Ada/Parsel</th><th>Zeminid</th><th>Tip</th><th>Nitelik</th><th>Alan</th><th>Mevkii</th><th>Pafta</th><th>CiltNo</th><th>SayfaNo</th></tr>
                        <tr><td class="pad-exp"><i class="tree-d"></i>ANKARA</td><td>ELMADAĞ</td><td>ELMADAĞ-İMA</td><td>111/1</td><td>40631770</td><td>Ana Taşınmaz</td><td>TARLA</td><td>564.00000</td><td>Elcekpınarı</td><td></td><td>1</td><td>1</td></tr>
                      </table>
                      <div class="gsubwrap">
                        <table class="gtbl gsub">
                          <colgroup><col style="width:143px"><col style="width:125px"><col style="width:75px"><col style="width:75px"><col style="width:75px"><col style="width:75px"><col style="width:75px"><col style="width:75px"></colgroup>
                          <tr><th>ZeminID</th><th>Nitelik</th><th>ArsaPay</th><th>ArsaPayda</th><th>BagBolNo</th><th>Kat</th><th>Blok</th><th>Giris</th></tr>
                          <tr><td class="pad-exp"><i class="tree-r"></i>40631770</td><td>TARLA</td><td>-</td><td>-</td><td>-</td><td>-</td><td>-</td><td>-</td></tr>
                        </table>
                      </div>
                    </div>
                  </div>
                </div>
              </div>
              <div class="dpadbar"></div>
              <div class="dstatus">111/1 Ada&nbsp; Parsel'ine ait taşınmaz bilgisi sorgusu tamamlandı.
                <svg class="grip" width="12" height="12" viewBox="0 0 12 12"><path d="M11 2L2 11M11 5l-6 6M11 8l-3 3" stroke="#999"/></svg>
              </div>
            </div>
          </div>

        </div>
        <div class="vscroll dither d-flex flex-column flex-none">
          <div class="sbtn"><i class="arr-u"></i></div>
          <div class="vthumb"></div>
          <div class="sbtn mt-auto"><i class="arr-d"></i></div>
        </div>
      </div>
      <div class="hscroll d-flex">
        <div class="dither flex-grow-1 d-flex">
          <div class="sbtn hbtn"><i class="arr-l"></i></div>
          <div class="hthumb"></div>
          <div class="sbtn hbtn ms-auto"><i class="arr-r"></i></div>
        </div>
        <div class="corner flex-none"></div>
      </div>
      <div class="btoolwrap d-flex align-items-center">
        <div class="lsbox"><div class="lsinner d-flex align-items-center"><div class="lsline"></div>-1 - N_DUZ</div></div>
        <div class="dd"><i></i></div>
        <div class="colorsw c-blue"></div><i class="smallarr mb-2"></i>
        <div class="wbox"><div class="winner d-flex align-items-center">1<div class="wbar"></div></div></div>
        <div class="ddw"><i class="smallarr m-0"></i></div>
        <div class="colorsw c-teal"></div><i class="smallarr mb-2"></i>
        <div class="gbtn"><svg width="17" height="17" viewBox="0 0 17 17"><rect width="17" height="17" rx="2" fill="#2f9c3c"/><path d="M3 12l5.500-7 5.500 7z" fill="#e8c030"/></svg></div>
        <div class="ybtn"><svg width="20" height="20" viewBox="0 0 20 20"><path d="M3 3l14 14M17 3L3 17" stroke="#2a2a08" stroke-width="6"/><path d="M3 3l14 14M17 3L3 17" stroke="#d8d020" stroke-width="4"/></svg></div>
        <svg class="mb-2 dis1" width="18" height="20" viewBox="0 0 18 20" style="margin-left:13px"><path d="M1 14l3-1M11 13q5 1 5-3V4" fill="none" stroke="#c4c4c4" stroke-width="1.500"/></svg>
        <svg class="mb-2" width="12" height="20" viewBox="0 0 12 20" style="margin-left:33px"><path d="M1 12l9-5" stroke="#c4c4c4" stroke-width="3"/><path d="M1 12l9-5" stroke="#f0f0f0"/></svg>
        <svg class="mb-2" width="20" height="20" viewBox="0 0 20 20" style="margin-left:8px"><path d="M2 3l7 4-7 4zM18 2l-6 6M12 10l7 4M2 17l7-6" fill="none" stroke="#c4c4c4" stroke-width="2"/></svg>
        <svg class="mb-2" width="18" height="20" viewBox="0 0 18 20" style="margin-left:5px"><path d="M1 13l6-3M10 9l7-3" stroke="#c4c4c4" stroke-width="3"/><path d="M1 13l6-3M10 9l7-3" stroke="#f0f0f0"/></svg>
        <svg class="mb-2" width="18" height="18" viewBox="0 0 18 18" style="margin-left:6px"><circle cx="9" cy="9" r="7.500" fill="none" stroke="#c4c4c4" stroke-width="1.500"/><circle cx="9" cy="9" r="5" fill="none" stroke="#c4c4c4"/></svg>
        <svg class="mb-2" width="14" height="20" viewBox="0 0 14 20" style="margin-left:10px"><path d="M1 14l4-1M9 10l3-6" stroke="#c4c4c4" stroke-width="2.500"/></svg>
        <svg class="mb-2" width="19" height="20" viewBox="0 0 19 20" style="margin-left:6px"><path d="M1 8l4-4 4 4M11 9l3 4 4-4" fill="none" stroke="#c4c4c4" stroke-width="2"/></svg>
        <svg class="mb-2" width="20" height="20" viewBox="0 0 20 20" style="margin-left:5px"><path d="M10 1l9 9-9 9-9-9zM5 5l10 10M15 5L5 15" fill="none" stroke="#c4c4c4" stroke-width="1.500"/></svg>
        <svg class="mb-2" width="18" height="20" viewBox="0 0 18 20" style="margin-left:5px"><path d="M1 5h7v4H1zM10 6h8M1 12h17M1 15h17" fill="none" stroke="#c4c4c4" stroke-width="1.300"/></svg>
        <svg class="mb-2" width="18" height="20" viewBox="0 0 18 20" style="margin-left:7px"><path d="M1 16h16M9 3v10M4 13h10v3H4z" fill="none" stroke="#c4c4c4" stroke-width="1.300"/></svg>
        <svg class="mb-2" width="20" height="20" viewBox="0 0 20 20" style="margin-left:5px"><path d="M1 6h18M3 6q3 4 1 10M17 6q-3 4-1 10M7 6q3 2 6 0" fill="none" stroke="#c4c4c4" stroke-width="1.400"/></svg>
        <div class="bookbtn" style="margin-left:12px"><svg width="20" height="20"><use href="#s-book"/></svg></div>
        <div class="dikwrap d-flex align-items-center"><div class="dikchk"></div><span>Dik Çiz</span></div>
      </div>
      <div class="cmdrow d-flex">
        <div class="cmdin">Komut:</div>
        <div class="scalebox">Ölçek [1: 3.767,15 ]</div>
      </div>
      <div class="statusrow d-flex">
        <div class="stp stp1">Koordinat(Y;X)&nbsp; 120,5442; 99,0034 m...</div>
        <div class="stp stp2">Çizim Süresi:0,000</div>
      </div>
    </div>

    <div class="rightdock flex-none">
      <div class="vtool rtool d-flex flex-column align-items-center">
        <div class="vgrip"></div>
        <svg width="20" height="17" viewBox="0 0 20 19"><path d="M1 18V9h6l2 2h7l-3 7z" fill="#f4de64" stroke="#222"/><path d="M10 9l8-7" stroke="#444"/><path d="M12 2l6 0-1 5-4-1z" fill="#3a72c8"/></svg>
        <div class="rtxt rtxt-a rm3">Aktif Proje</div>
        <i class="rarr rm2"></i>
        <svg class="rm10" width="20" height="14" viewBox="0 0 20 14"><path d="M1 3l6-2 12 2-6 3z" fill="#c01c1c" stroke="#111"/><path d="M1 3v8l12 2 6-3V3M1 6l12 3 6-3M1 9l12 2 6-2" fill="none" stroke="#111"/></svg>
        <div class="rtxt rm3">Aktif Tabaka</div>
        <i class="rarr rm10"></i>
        <svg class="rm10" width="18" height="18" viewBox="0 0 18 18"><circle cx="9" cy="9" r="8.500" fill="#1c2a6c"/><circle cx="9" cy="7" r="6" fill="#5c6cb0" opacity=".6"/><text x="9" y="13" text-anchor="middle" font-family="Liberation Sans" font-weight="700" font-size="11" fill="#fff">R</text></svg>
        <div class="rtxt rm2">Raster Liste</div>
        <div class="vovf w-100">▮▸</div>
      </div>
    </div>
  </div>
</div>
<script src="https://cdn.jsdelivr.net/npm/bootstrap@5.3.3/dist/js/bootstrap.bundle.min.js"></script>
</body>
</html>
